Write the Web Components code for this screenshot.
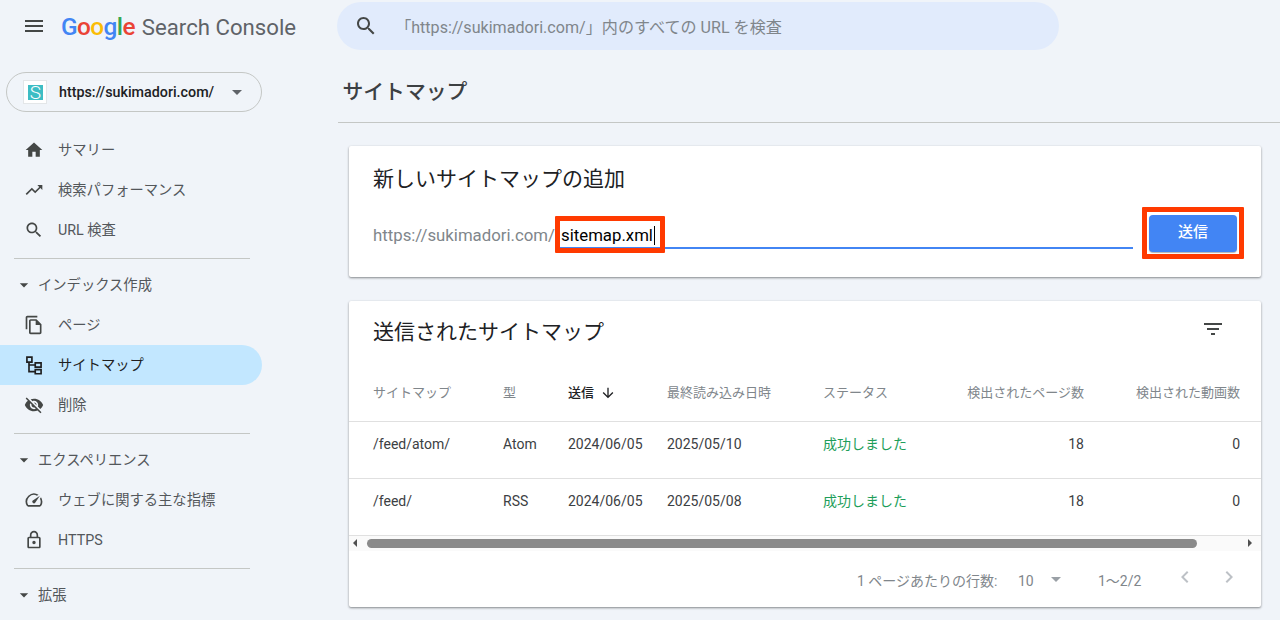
<!DOCTYPE html>
<html lang="ja"><head><meta charset="utf-8"><title>Search Console</title>
<style>
html,body{margin:0;padding:0;height:620px;overflow:hidden;background:#f0f4f9;font-family:Roboto,"Noto Sans CJK JP",sans-serif}
</style></head><body>
<script>
const ICONS={
menu:'<path d="M3 18h18v-2H3v2zm0-5h18v-2H3v2zm0-7v2h18V6H3z"/>',
home:'<path d="M10 20v-6h4v6h5v-8h3L12 3 2 12h3v8z"/>',
trend:'<path d="M16 6l2.29 2.29-4.88 4.88-4-4L2 16.59 3.41 18l6-6 4 4 6.3-6.29L22 12V6z"/>',
search:'<path d="M15.5 14h-.79l-.28-.27C15.41 12.59 16 11.11 16 9.5 16 5.91 13.09 3 9.5 3S3 5.91 3 9.5 5.91 16 9.5 16c1.61 0 3.09-.59 4.23-1.57l.27.28v.79l5 4.99L20.49 19l-4.99-5zm-6 0C7.01 14 5 11.99 5 9.5S7.01 5 9.5 5 14 7.01 14 9.5 11.99 14 9.5 14z"/>',
pages:'<path d="M16 1H4c-1.1 0-2 .9-2 2v14h2V3h12V1zm-1 4H8c-1.1 0-1.99.9-1.99 2L6 21c0 1.1.89 2 1.99 2H19c1.1 0 2-.9 2-2V11l-6-6zM8 21V7h6v5h5v9H8z"/>',
sitemap:'<path fill="none" stroke="currentColor" stroke-width="2" d="M3.5 2.5h6v6h-6zM13.5 9.5h7v5h-7zM13.5 17.5h7v5h-7zM6 8.5V20h7.5M6 12h7.5"/>',
eyeoff:'<path d="M12 7c2.76 0 5 2.24 5 5 0 .65-.13 1.26-.36 1.83l2.92 2.92c1.51-1.26 2.7-2.89 3.43-4.75-1.73-4.39-6-7.5-11-7.5-1.4 0-2.74.25-3.98.7l2.16 2.16C10.74 7.13 11.35 7 12 7zM2 4.27l2.28 2.28.46.46C3.08 8.3 1.78 10.02 1 12c1.73 4.39 6 7.5 11 7.5 1.55 0 3.03-.3 4.38-.84l.42.42L19.73 22 21 20.73 3.27 3 2 4.27zM7.53 9.8l1.55 1.55c-.05.21-.08.43-.08.65 0 1.66 1.34 3 3 3 .22 0 .44-.03.65-.08l1.55 1.55c-.67.33-1.41.53-2.2.53-2.76 0-5-2.24-5-5 0-.79.2-1.53.53-2.2zm4.31-.78l3.15 3.15.02-.16c0-1.66-1.34-3-3-3l-.17.01z"/>',
speed:'<path d="M20.38 8.57l-1.23 1.85a8 8 0 0 1-.22 7.58H5.07A8 8 0 0 1 15.58 6.85l1.85-1.23A10 10 0 0 0 3.35 19a2 2 0 0 0 1.72 1h13.85a2 2 0 0 0 1.74-1 10 10 0 0 0-.27-10.44zm-9.79 6.84a2 2 0 0 0 2.83 0l5.66-8.49-8.49 5.66a2 2 0 0 0 0 2.83z"/>',
lock:'<path d="M18 8h-1V6c0-2.76-2.24-5-5-5S7 3.24 7 6v2H6c-1.1 0-2 .9-2 2v10c0 1.1.9 2 2 2h12c1.1 0 2-.9 2-2V10c0-1.1-.9-2-2-2zM9 6c0-1.66 1.34-3 3-3s3 1.34 3 3v2H9V6zm9 14H6V10h12v10zm-6-3c1.1 0 2-.9 2-2s-.9-2-2-2-2 .9-2 2 .9 2 2 2z"/>',
down:'<path d="M20 12l-1.41-1.41L13 16.17V4h-2v12.17l-5.58-5.59L4 12l8 8 8-8z"/>',
filter:'<path d="M10 18h4v-2h-4v2zM3 6v2h18V6H3zm3 7h12v-2H6v2z"/>',
caret:'<path d="M7 10l5 5 5-5z"/>',
prev:'<path d="M15.41 7.41L14 6l-6 6 6 6 1.41-1.41L10.83 12z"/>',
next:'<path d="M10 6L8.59 7.41 13.17 12l-4.58 4.59L10 18l6-6z"/>'
};
function def(name,html){
  const t=document.createElement('template');t.innerHTML=html;
  customElements.define(name,class extends HTMLElement{
    constructor(){super();this.attachShadow({mode:'open'}).appendChild(t.content.cloneNode(true));}
  });
}
customElements.define('g-icon',class extends HTMLElement{
  constructor(){super();this.attachShadow({mode:'open'});}
  connectedCallback(){
    const s=this.getAttribute('size')||24;
    this.shadowRoot.innerHTML=`<style>:host{display:block;flex:none;width:${s}px;height:${s}px}svg{display:block;width:100%;height:100%;fill:currentColor}</style><svg viewBox="0 0 24 24">${ICONS[this.getAttribute('name')]}</svg>`;
  }
});
def('gsc-logo',`<style>
:host{display:flex;align-items:center;white-space:nowrap;margin-left:15px;padding-top:2px}
.g{font:500 24.4px/30px Roboto,sans-serif;letter-spacing:-.6px}
.s{font:400 22.2px/30px Roboto,sans-serif;color:#5f6368;margin-left:7px}
.b{color:#4285f4}.r{color:#ea4335}.y{color:#fbbc05}.l{color:#34a853}
</style><span class="g"><span class="b">G</span><span class="r">o</span><span class="y">o</span><span class="b">g</span><span class="l">l</span><span class="r">e</span></span><span class="s">Search Console</span>`);
def('gsc-search',`<style>
:host{display:flex;align-items:center;box-sizing:border-box;width:722px;height:48px;margin-left:41px;background:#e1ebfc;border-radius:24px;padding-left:17px}
g-icon{color:#444746}
span{margin-left:17px;padding-top:3px;font:400 16.1px/24px Roboto,"Noto Sans CJK JP",sans-serif;color:#80868b;white-space:nowrap}
</style><g-icon name="search"></g-icon><span><slot></slot></span>`);
def('gsc-header',`<style>
:host{display:flex;align-items:center;height:52px;padding-left:22px;box-sizing:border-box}
g-icon{color:#444746}
</style><g-icon name="menu"></g-icon><slot></slot>`);
def('gsc-property',`<style>
:host{display:flex;align-items:center;box-sizing:border-box;width:256px;height:40px;margin-left:6px;border:1px solid #c4c7c5;border-radius:20px;padding-left:16px}
.fav{box-sizing:border-box;width:24px;height:24px;background:#fff;border:1px solid #e3e6e8;padding:4px 3px 3px 4px;flex:none}
.in{display:flex;align-items:center;justify-content:center;width:100%;height:100%;background:#3dbdc4;color:#fff;font:300 19px/15px Roboto,sans-serif}
.t{margin-left:12px;font:500 14.3px/20px Roboto,sans-serif;color:#202124;width:166px;white-space:nowrap}
g-icon{color:#5f6368}
</style><div class="fav"><div class="in">S</div></div><span class="t"><slot></slot></span><g-icon name="caret"></g-icon>`);
customElements.define('gsc-nav-item',class extends HTMLElement{
  constructor(){super();this.attachShadow({mode:'open'});}
  connectedCallback(){
    this.shadowRoot.innerHTML=`<style>
:host{display:flex;align-items:center;box-sizing:border-box;width:262px;height:40px;padding-left:24px;border-radius:0 20px 20px 0;font:400 14.3px/20px Roboto,"Noto Sans CJK JP",sans-serif;color:#53575b}
:host([active]){background:#c2e7ff;color:#1f1f1f}
g-icon{color:#444746;margin-right:14px}
:host([active]) g-icon{color:#1f1f1f}
</style><g-icon size="20" name="${this.getAttribute('icon')}"></g-icon><slot></slot>`;
  }
});
def('gsc-nav-group',`<style>
:host{display:block}
.h{display:flex;align-items:center;height:40px;padding-left:14px;font:400 14.3px/20px Roboto,"Noto Sans CJK JP",sans-serif;color:#53575b}
g-icon{color:#444746;margin-right:4px}
</style><div class="h"><g-icon size="20" name="caret"></g-icon><slot name="label"></slot></div><slot></slot>`);
def('gsc-divider',`<style>:host{display:block;width:236px;height:1px;background:#c4c7c5;margin:8px 0 6px 14px}</style>`);
def('gsc-sidebar',`<style>
:host{display:block;width:338px;flex:none;padding-top:20px;box-sizing:border-box}
nav{display:block;margin-top:18px}
</style><slot name="top"></slot><nav><slot></slot></nav>`);
def('gsc-page-title',`<style>
:host{display:block;box-sizing:border-box;height:71px;padding:25px 0 0 4.5px;border-bottom:1px solid #c4c7c5;font:500 20.8px/30px Roboto,"Noto Sans CJK JP",sans-serif;color:#3c4043}
</style><slot></slot>`);
def('gsc-card',`<style>
:host{display:block;box-sizing:border-box;width:912px;margin-left:11px;background:#fff;border-radius:2px;box-shadow:0 1px 2px rgba(60,64,67,.45),0 1px 3px rgba(60,64,67,.2)}
</style><slot></slot>`);
def('gsc-add-form',`<style>
:host{display:block;height:131px;box-sizing:border-box;padding:18px 17px 0 24px}
h2{margin:0;font:400 21px/30px Roboto,"Noto Sans CJK JP",sans-serif;color:#202124}
.row{display:flex;margin-top:13px;height:52px}
.pre{font:400 16.8px/26px Roboto,sans-serif;color:#80868b;margin-top:15px;white-space:nowrap;width:182px;flex:none}
.field{position:relative;flex:1;box-sizing:border-box;height:27px;margin-top:15px;border-bottom:2px solid #4285f4;padding-left:6px;font:400 16.8px/26px Roboto,sans-serif;color:#000;white-space:nowrap}
.field i{display:inline-block;width:1px;height:19px;background:#000;vertical-align:-4px;margin-left:1px}
.mark{position:absolute;box-sizing:border-box;border:5px solid #ff3a00;border-radius:1px}
.field .mark{left:0;top:-6px;width:110px;height:37px}
.sub{box-sizing:border-box;width:102px;height:52px;margin-left:9px;border:5px solid #ff3a00;border-radius:1px;padding:3px 2px 2px;flex:none}
button{display:block;width:88px;height:37px;border:0;padding:0 0 3px;background:#4285f4;color:#fff;border-radius:4px;box-shadow:0 1px 1px rgba(60,64,67,.4);font:500 15px/20px Roboto,"Noto Sans CJK JP",sans-serif}
</style><h2><slot name="title"></slot></h2><div class="row"><span class="pre"><slot name="prefix"></slot></span><div class="field"><slot name="value"></slot><i></i><div class="mark"></div></div><div class="sub"><button><slot name="submit"></slot></button></div></div>`);
def('gsc-table-head',`<style>
:host{display:flex;align-items:center;justify-content:space-between;height:64px;box-sizing:border-box;padding:0 36px 0 24px}
h2{margin:-2px 0 0;font:400 21px/30px Roboto,"Noto Sans CJK JP",sans-serif;color:#202124}
g-icon{color:#444746;margin-top:-8px}
</style><h2><slot></slot></h2><g-icon name="filter"></g-icon>`);
def('gsc-row',`<style>
:host{display:grid;grid-template-columns:130px 65px 99px 156px 130px 131px 156px;box-sizing:border-box;height:57px;padding:12px 21px 0 24px;border-bottom:1px solid #e0e0e0;font:400 14px/20px Roboto,"Noto Sans CJK JP",sans-serif;color:#3c4043}
:host([head]){padding-top:18px;font-size:13px;color:#80868b}
</style><slot></slot>`);
def('gsc-cell',`<style>
:host{display:flex;align-items:center;white-space:nowrap;height:20px}
:host([num]){justify-content:flex-end}
:host([ok]){color:#1e9e5a}
:host([sort]){color:#202124;font-weight:500;gap:6px}
</style><slot></slot>`);
def('gsc-scrollbar',`<style>
:host{display:flex;align-items:center;box-sizing:border-box;height:15px;background:#fafafa;padding:0 6px 1px 4px}
.a{width:0;height:0;border-style:solid;border-width:4px 4px 4px 0;border-color:transparent #505050;flex:none}
.a.r{border-width:4px 0 4px 4px;margin-left:51px}
.t{width:830px;height:9px;border-radius:5px;background:#8a8a8a;margin-left:10px;flex:none}
</style><div class="a"></div><div class="t"></div><div class="a r"></div>`);
def('gsc-pager',`<style>
:host{display:flex;align-items:center;box-sizing:border-box;height:56px;padding:3px 20px 0 508px;font:400 14px/20px Roboto,"Noto Sans CJK JP",sans-serif;color:#80868b;white-space:nowrap}
.c{width:141px;flex:none}.n{margin-left:20px;width:16px}
.car{margin:-3px 0 0 10px;color:#9aa0a6}
.p{margin-left:30px;width:43px}
.i{color:#bdc1c6;margin-top:-7px}
.i.a{margin-left:32px}.i.b{margin-left:20px}
</style><span class="c"><slot name="label"></slot></span><span class="n"><slot name="size"></slot></span><g-icon class="car" name="caret"></g-icon><span class="p"><slot name="range"></slot></span><g-icon class="i a" name="prev"></g-icon><g-icon class="i b" name="next"></g-icon>`);
def('gsc-main',`<style>
:host{display:block;flex:1;min-width:0}
.c{display:flex;flex-direction:column;gap:24px;padding-top:23px}
</style><slot name="title"></slot><div class="c"><slot></slot></div>`);
def('gsc-app',`<style>
:host{display:block;width:1280px;height:620px;overflow:hidden}
.b{display:flex}
</style><slot name="header"></slot><div class="b"><slot></slot></div>`);
document.body.innerHTML=`<gsc-app>
<gsc-header slot="header"><gsc-logo></gsc-logo><gsc-search>「https://sukimadori.com/」内のすべての URL を検査</gsc-search></gsc-header>
<gsc-sidebar>
  <gsc-property slot="top">https://sukimadori.com/</gsc-property>
  <gsc-nav-item icon="home">サマリー</gsc-nav-item>
  <gsc-nav-item icon="trend">検索パフォーマンス</gsc-nav-item>
  <gsc-nav-item icon="search">URL 検査</gsc-nav-item>
  <gsc-divider></gsc-divider>
  <gsc-nav-group><span slot="label">インデックス作成</span>
    <gsc-nav-item icon="pages">ページ</gsc-nav-item>
    <gsc-nav-item icon="sitemap" active>サイトマップ</gsc-nav-item>
    <gsc-nav-item icon="eyeoff">削除</gsc-nav-item>
  </gsc-nav-group>
  <gsc-divider></gsc-divider>
  <gsc-nav-group><span slot="label">エクスペリエンス</span>
    <gsc-nav-item icon="speed">ウェブに関する主な指標</gsc-nav-item>
    <gsc-nav-item icon="lock">HTTPS</gsc-nav-item>
  </gsc-nav-group>
  <gsc-divider></gsc-divider>
  <gsc-nav-group><span slot="label">拡張</span></gsc-nav-group>
</gsc-sidebar>
<gsc-main>
  <gsc-page-title slot="title">サイトマップ</gsc-page-title>
  <gsc-card><gsc-add-form>
    <span slot="title">新しいサイトマップの追加</span>
    <span slot="prefix">https://sukimadori.com/</span>
    <span slot="value">sitemap.xml</span>
    <span slot="submit">送信</span>
  </gsc-add-form></gsc-card>
  <gsc-card>
    <gsc-table-head>送信されたサイトマップ</gsc-table-head>
    <gsc-row head><gsc-cell>サイトマップ</gsc-cell><gsc-cell>型</gsc-cell><gsc-cell sort>送信<g-icon size="16" name="down"></g-icon></gsc-cell><gsc-cell>最終読み込み日時</gsc-cell><gsc-cell>ステータス</gsc-cell><gsc-cell num>検出されたページ数</gsc-cell><gsc-cell num>検出された動画数</gsc-cell></gsc-row>
    <gsc-row><gsc-cell>/feed/atom/</gsc-cell><gsc-cell>Atom</gsc-cell><gsc-cell>2024/06/05</gsc-cell><gsc-cell>2025/05/10</gsc-cell><gsc-cell ok>成功しました</gsc-cell><gsc-cell num>18</gsc-cell><gsc-cell num>0</gsc-cell></gsc-row>
    <gsc-row><gsc-cell>/feed/</gsc-cell><gsc-cell>RSS</gsc-cell><gsc-cell>2024/06/05</gsc-cell><gsc-cell>2025/05/08</gsc-cell><gsc-cell ok>成功しました</gsc-cell><gsc-cell num>18</gsc-cell><gsc-cell num>0</gsc-cell></gsc-row>
    <gsc-scrollbar></gsc-scrollbar>
    <gsc-pager><span slot="label">1 ページあたりの行数:</span><span slot="size">10</span><span slot="range">1〜2/2</span></gsc-pager>
  </gsc-card>
</gsc-main>
</gsc-app>`;
</script>
</body></html>
